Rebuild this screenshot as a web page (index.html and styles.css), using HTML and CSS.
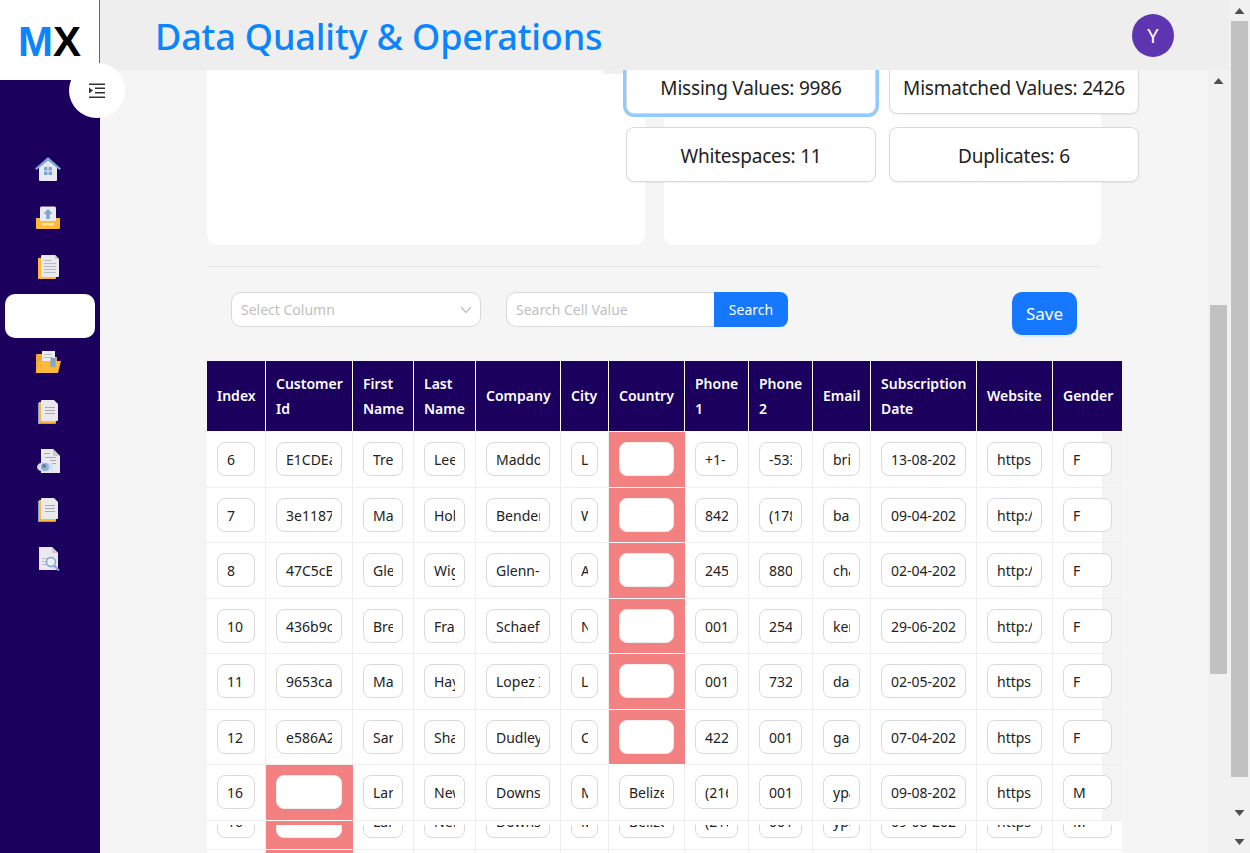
FILE: index.html
```html
<!DOCTYPE html>
<html lang="en">
<head>
    <meta charset="UTF-8">
    <meta name="viewport" content="width=device-width, initial-scale=1.0">
    <title>Data Quality &amp; Operations</title>
    <link rel="stylesheet" href="styles.css">
</head>
<body>
<div class="app">
    <aside class="sidebar">
        <div class="logo"><span class="logo-m">M</span>X</div>
        <button class="toggle" aria-label="Toggle menu">
            <svg width="18" height="16" viewBox="0 0 18 16"><path d="M1 0.5h16v1.6H1zM7 4.6h10v1.5H7zM7 9h10v1.5H7zM1 13.4h16V15H1zM1 4.6l4 3-4 3z" fill="#333"/></svg>
        </button>
        <nav class="menu">
            <a class="menu-item"><svg width="28" height="26" viewBox="0 0 28 26"><path d="M5 11 14 4l9 7v13a1 1 0 0 1-1 1H6a1 1 0 0 1-1-1z" fill="#e8ebf2"/><path d="M1 12.5 14 1l13 11.500-1.500 1.500L14 4.500 2.500 14z" fill="#7ea6cf"/><path d="M10 11h3.500v3.500H10zM14.500 11H18v3.500h-3.500zM10 15.500h3.500V19H10zM14.500 15.500H18V19h-3.500z" fill="#7ea6cf"/></svg></a>
            <a class="menu-item"><svg width="28" height="26" viewBox="0 0 28 26"><path d="M6 3a1.500 1.500 0 0 1 1.500-1.500h13A1.500 1.500 0 0 1 22 3v14H6z" fill="#e8ebf2"/><path d="M14 4l4.500 5h-2.700v5h-3.600V9H9.500z" fill="#7ea6cf"/><path d="M2 13h4v3h16v-3h4v10a1 1 0 0 1-1 1H3a1 1 0 0 1-1-1z" fill="#fdb93a"/><path d="M8 18h12v2.500H8z" fill="#fde3a6"/></svg></a>
            <a class="menu-item"><svg width="28" height="26" viewBox="0 0 28 26"><path d="M4 4h18v20a1 1 0 0 1-1 1H5a1 1 0 0 1-1-1z" fill="#fdb93a"/><path d="M7 2a1 1 0 0 1 1-1h13l4 4v17a1 1 0 0 1-1 1H8a1 1 0 0 1-1-1z" fill="#e9e9ee"/><path d="M21 1l4 4h-4z" fill="#c9cad2"/><path d="M10 6h7v1h-7zM10 9h12v1H10zM10 12h12v1H10zM10 15h12v1H10zM10 18h12v1H10z" fill="#b9bac2"/></svg></a>
            <a class="menu-item menu-item-active"></a>
            <a class="menu-item"><svg width="28" height="26" viewBox="0 0 28 26"><path d="M2 5a1 1 0 0 1 1-1h7l2 3h11v16H3a1 1 0 0 1-1-1z" fill="#f3a92f"/><path d="M8 1h13v15H8z" fill="#eceef3"/><path d="M10 4h8v1h-8zM10 7h9v1h-9z" fill="#b9bac2"/><path d="M5 11h22l-3 12H2z" fill="#fdb93a"/><path d="M16.500 8h5v10l-2.500-2-2.500 2z" fill="#7ea6cf"/></svg></a>
            <a class="menu-item"><svg width="28" height="26" viewBox="0 0 28 26"><path d="M4 4h18v20a1 1 0 0 1-1 1H4z" fill="#7ea6cf"/><path d="M5 3h17v20a1 1 0 0 1-1 1H5z" fill="#fdb93a"/><path d="M7 2a1 1 0 0 1 1-1h12l4 4v16a1 1 0 0 1-1 1H8a1 1 0 0 1-1-1z" fill="#e9e9ee"/><path d="M11 8h10v1H11zM11 11h10v1H11zM11 14h10v1H11z" fill="#a9aab2"/></svg></a>
            <a class="menu-item"><svg width="28" height="26" viewBox="0 0 28 26"><path d="M7 1h12l7 7v17H7z" fill="#e9e9ee"/><path d="M19 1l7 7h-7z" fill="#c9cad2"/><path d="M10 5h6v1h-6zM11 9h11v1H11zM16 12h6v1h-6zM18 15h4v1h-4z" fill="#a9aab2"/><ellipse cx="11" cy="19" rx="8" ry="5" fill="#cfe0f2"/><circle cx="11" cy="19" r="4" fill="#8fb3d9"/><circle cx="10" cy="18" r="2" fill="#6b7a92"/></svg></a>
            <a class="menu-item"><svg width="28" height="26" viewBox="0 0 28 26"><path d="M4 4h18v20a1 1 0 0 1-1 1H4z" fill="#7ea6cf"/><path d="M5 3h17v20a1 1 0 0 1-1 1H5z" fill="#fdb93a"/><path d="M7 2a1 1 0 0 1 1-1h12l4 4v16a1 1 0 0 1-1 1H8a1 1 0 0 1-1-1z" fill="#e9e9ee"/><path d="M11 8h10v1H11zM11 11h10v1H11zM11 14h10v1H11z" fill="#a9aab2"/></svg></a>
            <a class="menu-item"><svg width="28" height="26" viewBox="0 0 28 26"><path d="M5 1h13l6 6v17H5z" fill="#e9e9ee"/><path d="M18 1l6 6h-6z" fill="#c9cad2"/><path d="M8 12h6v1H8zM8 15h5v1H8zM8 18h6v1H8z" fill="#b9bac2"/><circle cx="17" cy="16" r="4.500" fill="#e9eff6" stroke="#7ea6cf" stroke-width="1.500"/><path d="M20 19.500l5 5" stroke="#7ea6cf" stroke-width="2"/></svg></a>
        </nav>
    </aside>

    <div class="main">
        <header class="topbar">
            <h1 class="page-title">Data Quality &amp; Operations</h1>
            <div class="avatar">Y</div>
        </header>

        <div class="body-row">
            <main class="content">
                <div class="panels">
                    <section class="panel panel-left"><span class="panel-notch"></span></section>
                    <section class="panel panel-right">
                        <div class="stats">
                            <div class="stat stat-active">Missing Values: 9986</div>
                            <div class="stat">Mismatched Values: 2426</div>
                            <div class="stat">Whitespaces: 11</div>
                            <div class="stat">Duplicates: 6</div>
                        </div>
                    </section>
                </div>

                <hr class="divider">

                <div class="toolbar">
                    <div class="select">
                        <span>Select Column</span>
                        <svg width="12" height="8" viewBox="0 0 12 8"><path d="M1 1l5 5.500L11 1" fill="none" stroke="#bfbfbf" stroke-width="1.200"/></svg>
                    </div>
                    <div class="search">
                        <input class="search-input" type="text" placeholder="Search Cell Value">
                        <button class="search-btn">Search</button>
                    </div>
                    <button class="save-btn">Save</button>
                </div>

                <div class="table-clip">
                    <table class="data-table">
                        <colgroup><col class="c1"><col class="c2"><col class="c3"><col class="c4"><col class="c5"><col class="c6"><col class="c7"><col class="c8"><col class="c9"><col class="c10"><col class="c11"><col class="c12"><col class="c13"></colgroup>
                        <thead>
                            <tr><th>Index</th><th>Customer Id</th><th>First Name</th><th>Last Name</th><th>Company</th><th>City</th><th>Country</th><th>Phone 1</th><th>Phone 2</th><th>Email</th><th>Subscription Date</th><th>Website</th><th>Gender</th></tr>
                        </thead>
                        <tbody>
                            <tr><td><input value="6"></td><td><input value="E1CDEaf12b"></td><td><input value="Trevor"></td><td><input value="Lee"></td><td><input value="Maddox Inc"></td><td><input value="Lakeview"></td><td class="bad"><input value=""></td><td><input value="+1-"></td><td><input value="-5336"></td><td><input value="brian"></td><td><input value="13-08-2021"></td><td><input value="https://"></td><td><input value="F"></td></tr>
                            <tr><td><input value="7"></td><td><input value="3e1187aa90"></td><td><input value="Mark"></td><td><input value="Holt"></td><td><input value="Bender Ltd"></td><td><input value="West"></td><td class="bad"><input value=""></td><td><input value="8425"></td><td><input value="(178"></td><td><input value="bailey"></td><td><input value="09-04-2021"></td><td><input value="http://"></td><td><input value="F"></td></tr>
                            <tr><td><input value="8"></td><td><input value="47C5cEd120"></td><td><input value="Glen"></td><td><input value="Wiggins"></td><td><input value="Glenn-Hart"></td><td><input value="Alma"></td><td class="bad"><input value=""></td><td><input value="2456"></td><td><input value="8807"></td><td><input value="chad"></td><td><input value="02-04-2021"></td><td><input value="http://"></td><td><input value="F"></td></tr>
                            <tr><td><input value="10"></td><td><input value="436b9c77e1"></td><td><input value="Brent"></td><td><input value="Franco"></td><td><input value="Schaefer Co"></td><td><input value="Nile"></td><td class="bad"><input value=""></td><td><input value="0013"></td><td><input value="2549"></td><td><input value="kerry"></td><td><input value="29-06-2021"></td><td><input value="http://"></td><td><input value="F"></td></tr>
                            <tr><td><input value="11"></td><td><input value="9653ca01fd"></td><td><input value="Maya"></td><td><input value="Hayes"></td><td><input value="Lopez Inc"></td><td><input value="Lima"></td><td class="bad"><input value=""></td><td><input value="0018"></td><td><input value="7320"></td><td><input value="dawn"></td><td><input value="02-05-2021"></td><td><input value="https://"></td><td><input value="F"></td></tr>
                            <tr><td><input value="12"></td><td><input value="e586A2bc43"></td><td><input value="Sara"></td><td><input value="Shaw"></td><td><input value="Dudley LLC"></td><td><input value="Cairo"></td><td class="bad"><input value=""></td><td><input value="4221"></td><td><input value="0015"></td><td><input value="gary"></td><td><input value="07-04-2021"></td><td><input value="https://"></td><td><input value="F"></td></tr>
                            <tr><td><input value="16"></td><td class="bad"><input value=""></td><td><input value="Lara"></td><td><input value="Newton"></td><td><input value="Downs Ltd"></td><td><input value="Male"></td><td><input value="Belize"></td><td><input value="(216"></td><td><input value="0016"></td><td><input value="ypark"></td><td><input value="09-08-2021"></td><td><input value="https://"></td><td><input value="M"></td></tr>
                        </tbody>
                    </table>
                </div>

                <!-- ritaglio della riga ripetuta sotto la tabella -->
                <div class="table-sliver">
                    <table class="data-table sliver-table">
                        <colgroup><col class="c1"><col class="c2"><col class="c3"><col class="c4"><col class="c5"><col class="c6"><col class="c7"><col class="c8"><col class="c9"><col class="c10"><col class="c11"><col class="c12"><col class="c13"></colgroup>
                        <tbody>
                            <tr><td><div class="cut"><input value="16"></div></td><td class="bad"><div class="cut"><input value=""></div></td><td><div class="cut"><input value="Lara"></div></td><td><div class="cut"><input value="Newton"></div></td><td><div class="cut"><input value="Downs Ltd"></div></td><td><div class="cut"><input value="Male"></div></td><td><div class="cut"><input value="Belize"></div></td><td><div class="cut"><input value="(216"></div></td><td><div class="cut"><input value="0016"></div></td><td><div class="cut"><input value="ypark"></div></td><td><div class="cut"><input value="09-08-2021"></div></td><td><div class="cut"><input value="https://"></div></td><td><div class="cut"><input value="M"></div></td></tr>
                            <tr class="next-row"><td></td><td class="bad"></td><td></td><td></td><td></td><td></td><td></td><td></td><td></td><td></td><td></td><td></td><td></td></tr>
                        </tbody>
                    </table>
                </div>
            </main>

            <div class="scrollbar scrollbar-inner">
                <span class="arrow arrow-up"></span>
                <span class="thumb"></span>
            </div>
        </div>
    </div>

    <div class="scrollbar scrollbar-outer">
        <span class="arrow arrow-up"></span>
        <span class="thumb"></span>
        <span class="arrow arrow-down"></span>
        <span class="arrow arrow-down"></span>
    </div>
</div>
</body>
</html>
```

FILE: styles.css
```css
* { box-sizing: border-box; }

html, body {
    margin: 0;
    height: 100%;
    overflow: hidden;
}

body {
    font-family: "Noto Sans", "Open Sans", sans-serif;
    font-size: 14px;
    color: #222;
    background: #f5f5f5;
}

input, button { font-family: inherit; }

.app {
    display: flex;
    height: 853px;
}

/* sidebar */
.sidebar {
    position: relative;
    width: 100px;
    flex: none;
    background: #1b005e;
}

.logo {
    height: 80px;
    background: #fff;
    border-right: 1px solid #1677ff;
    padding: 18px 0 0 18px;
    font-family: "Liberation Sans", Arial, sans-serif;
    font-size: 42px;
    line-height: 48px;
    font-weight: bold;
    color: #000;
}

.logo-m { color: #0a84ff; }

.toggle {
    position: absolute;
    left: 69px;
    top: 63px;
    width: 56px;
    height: 55px;
    padding: 0;
    border: 0;
    border-radius: 50%;
    background: #fff;
    z-index: 3;
    display: flex;
    align-items: center;
    justify-content: center;
}

.menu {
    padding: 67px 5px 0;
    display: flex;
    flex-direction: column;
    gap: 5px;
}

.menu-item {
    height: 44px;
    border-radius: 10px;
    display: flex;
    align-items: center;
    justify-content: center;
    padding-right: 4px;
}

.menu-item-active {
    background: #fff;
    margin-bottom: -2px;
}

/* header */
.main {
    flex: 1;
    min-width: 0;
    display: flex;
    flex-direction: column;
}

.topbar {
    height: 70px;
    flex: none;
    background: #eee;
    display: flex;
    align-items: center;
    justify-content: space-between;
    padding: 0 55px 0 55px;
    position: relative;
    z-index: 2;
}

.page-title {
    margin: 4px 0 0;
    font-size: 36px;
    line-height: 48px;
    font-weight: 500;
    letter-spacing: -0.16px;
    color: #0a84ff;
}

.avatar {
    width: 42px;
    height: 43px;
    border-radius: 50%;
    background: #5e35b1;
    color: #fff;
    font-size: 20px;
    display: flex;
    align-items: center;
    justify-content: center;
}

.body-row {
    flex: 1;
    min-height: 0;
    display: flex;
}

.content {
    flex: 1;
    min-width: 0;
    overflow: hidden;
    padding-left: 107px;
}

/* top panels */
.panels {
    display: flex;
    gap: 19px;
    width: 894px;
    height: 186px;
    margin-top: -11px;
}

.panel {
    background: #fff;
    border-radius: 10px;
}

.panel-left {
    position: relative;
    width: 438px;
    flex: none;
}

.panel-right {
    width: 437px;
    flex: none;
}

.panel-notch {
    position: absolute;
    left: 396px;
    top: 11px;
    width: 42px;
    height: 4px;
    background: #f0f0f0;
}

.stats {
    display: grid;
    grid-template-columns: 250px 250px;
    grid-auto-rows: 55px;
    gap: 13px;
    width: 513px;
    margin-left: -38px;
}

.stat {
    background: #fff;
    border: 1px solid #d9d9d9;
    border-radius: 8px;
    box-shadow: 0 1px 2px rgba(0, 0, 0, 0.06);
    display: flex;
    align-items: center;
    justify-content: center;
    font-size: 19px;
    letter-spacing: -0.2px;
    padding-top: 2px;
    white-space: nowrap;
    position: relative;
}

.stat-active { box-shadow: 0 0 0 3px #91caff; }

.divider {
    width: 894px;
    height: 1px;
    margin: 21px 0 25px;
    border: 0;
    background: #e5e5e5;
}

/* filter bar */
.toolbar {
    display: flex;
    align-items: flex-start;
    width: 894px;
    padding: 0 24px;
    margin-bottom: 26px;
}

.select {
    width: 250px;
    height: 35px;
    margin-right: 25px;
    padding: 0 8px 0 9px;
    background: #fff;
    border: 1px solid #d9d9d9;
    border-radius: 10px;
    display: flex;
    align-items: center;
    justify-content: space-between;
    color: #bfbfbf;
}

.search {
    display: flex;
    width: 282px;
    height: 35px;
}

.search-input {
    flex: 1;
    min-width: 0;
    padding: 0 9px;
    font-size: 14px;
    background: #fff;
    border: 1px solid #d9d9d9;
    border-right: 0;
    border-radius: 10px 0 0 10px;
    outline: none;
}

.search-input::placeholder { color: #bfbfbf; }

.search-btn {
    width: 74px;
    flex: none;
    border: 0;
    border-radius: 0 8px 8px 0;
    background: #1677ff;
    color: #fff;
    font-size: 14px;
}

.save-btn {
    width: 65px;
    height: 43px;
    margin-left: auto;
    border: 0;
    border-radius: 10px;
    background: #1677ff;
    color: #fff;
    font-size: 17px;
    box-shadow: 0 2px 0 rgba(5, 145, 255, 0.1);
}

/* table */
.table-clip {
    width: 915px;
    height: 460px;
    overflow: hidden;
}

.data-table {
    width: 915px;
    table-layout: fixed;
    border-collapse: separate;
    border-spacing: 0;
    background: linear-gradient(90deg, #fff 895px, #f3f3f3 895px);
}

.c1 { width: 59px; }
.c2 { width: 87px; }
.c3 { width: 61px; }
.c4 { width: 62px; }
.c5 { width: 85px; }
.c6 { width: 48px; }
.c7 { width: 76px; }
.c8 { width: 64px; }
.c9 { width: 64px; }
.c10 { width: 58px; }
.c11 { width: 106px; }
.c12 { width: 76px; }
.c13 { width: 69px; }

.data-table th {
    height: 71px;
    padding: 0 10px 1px;
    background: #1b005e;
    border-right: 1px solid #fff;
    border-bottom: 1px solid #fff;
    color: #fff;
    font-size: 14px;
    font-weight: 600;
    line-height: 25px;
    text-align: left;
}

.data-table th:last-child { border-right: 0; }

.data-table td {
    padding: 10px 10px 0;
    vertical-align: top;
    border-right: 1px solid #eee;
    border-bottom: 1px solid #eee;
}

.data-table td:last-child { border-right: 0; }

.data-table tbody tr:nth-child(odd) td { height: 56px; }
.data-table tbody tr:nth-child(even) td { height: 55px; }

.data-table td.bad {
    background: #f38181;
    border-right-color: #f38181;
    border-bottom-color: #fff;
}

.data-table input {
    display: block;
    width: 100%;
    height: 34px;
    padding: 0 9px;
    font-size: 14px;
    color: #222;
    background: #fff;
    border: 1px solid #d9d9d9;
    border-radius: 8px;
    outline: none;
}

.data-table td.bad input { border-color: #eee; }

/* strip below the table */
.table-sliver {
    width: 915px;
    height: 32px;
    overflow: hidden;
}

.sliver-table { background: #fff; }

.sliver-table tbody tr:nth-child(odd) td {
    height: 29px;
    padding-top: 4px;
}

.sliver-table .next-row td {
    height: 3px;
    padding: 0;
    border-bottom: 0;
}

.cut {
    height: 13px;
    overflow: hidden;
}

.cut input { margin-top: -21px; }

/* scrollbars */
.scrollbar {
    width: 21px;
    flex: none;
    background: #f1f1f1;
    display: flex;
    flex-direction: column;
    align-items: center;
}

.scrollbar-inner { padding: 8px 0 0; }
.scrollbar-outer { padding: 8px 0 8px; }

.thumb {
    width: 17px;
    flex: none;
    background: #c1c1c1;
}

.scrollbar-inner .thumb { height: 369px; margin-top: 221px; }
.scrollbar-outer .thumb { height: 756px; margin-top: 7px; }

.arrow {
    display: block;
    width: 10px;
    height: 6px;
    flex: none;
    background: #505050;
}

.arrow-up { clip-path: polygon(50% 0, 100% 100%, 0 100%); }

.arrow-down {
    margin-top: auto;
    clip-path: polygon(0 0, 100% 0, 50% 100%);
}

.arrow-down + .arrow-down { margin-top: 23px; }
```
